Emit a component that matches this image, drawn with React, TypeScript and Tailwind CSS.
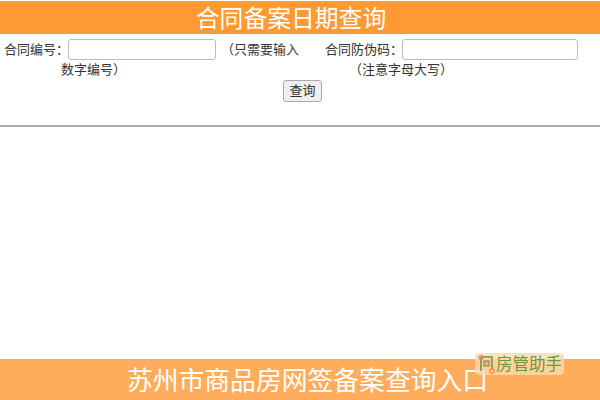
const FONT = "font-['Liberation_Sans','Noto_Sans_CJK_SC',sans-serif]";

export default function App() {
  return (
    <div className={`relative flex h-[400px] w-[600px] flex-col overflow-hidden bg-white text-[13px] leading-[18px] text-[#333] ${FONT}`}>
      <h1 className="mt-px flex h-[33px] items-center justify-center bg-[#ff9933] pr-[18px] pt-[3px] text-[23.8px] font-normal leading-none text-white">
        合同备案日期查询
      </h1>

      <form className="flex h-[93px] flex-col border-b-2 border-[#aaa] pt-[5px]">
        <div className="flex">
          <div className="flex w-[300px] flex-col">
            <div className="flex h-[21px] items-center pl-[4px]">
              <label className="w-[64px] whitespace-nowrap">合同编号：</label>
              <input className="h-[21px] w-[148px] rounded-[3px] border border-[#bbb] bg-white" />
              <span className="ml-[5px] whitespace-nowrap">（只需要输入</span>
            </div>
            <div className="mt-[1px] pl-[61px]">数字编号）</div>
          </div>
          <div className="flex flex-col">
            <div className="flex h-[21px] items-center pl-[25px]">
              <label className="w-[77px] whitespace-nowrap">合同防伪码：</label>
              <input className="h-[21px] w-[176px] rounded-[3px] border border-[#bbb] bg-white" />
            </div>
            <div className="mt-[1px] pl-[49px]">（注意字母大写）</div>
          </div>
        </div>
        <div className="mt-[1px] flex justify-center pl-[5px]">
          <button type="button" className="h-[22px] w-[39px] rounded-[3px] border border-[#aaa] bg-[#efefef] text-[13px] text-[#333]">
            查询
          </button>
        </div>
      </form>

      <div className="flex-1" />

      <footer className="flex h-[41px] items-center justify-center bg-[#ffad5c] pl-[15px] pt-[5px] text-[25.8px] leading-none text-white">
        苏州市商品房网签备案查询入口
      </footer>

      <div className="absolute left-[475px] top-[353px] flex h-[22px] w-[89px] items-center rounded-[4px] bg-[#ffd9ae]/80 pl-[1px] text-[16.5px] leading-none text-[#6a9a40]">
        <svg width="20" height="22" viewBox="0 0 20 22" fill="none">
          <path d="M5 4v14M5 4h11v12" stroke="#6a9a4a" strokeWidth="1.6" />
          <rect x="8" y="8" width="5" height="5" stroke="#6a9a4a" strokeWidth="1.2" />
          <circle cx="5" cy="4.500" r="2" stroke="#ff7a3c" strokeWidth="1.2" />
          <circle cx="11" cy="10.500" r="1.600" stroke="#ff7a3c" strokeWidth="1" />
          <circle cx="16" cy="18" r="2.200" stroke="#ff7a3c" strokeWidth="1.2" />
        </svg>
        <span>房管助手</span>
      </div>
    </div>
  );
}
